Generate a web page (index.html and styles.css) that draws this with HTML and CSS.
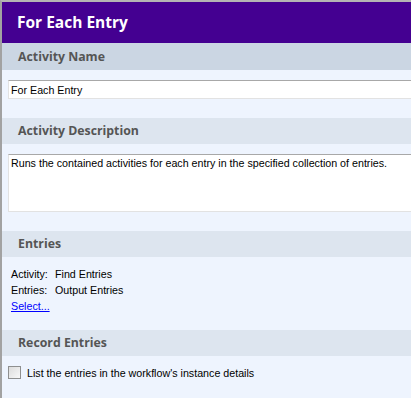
FILE: index.html
```html
<!DOCTYPE html>
<html>
<head>
    <title>For Each Entry</title>
    <link rel="stylesheet" href="styles.css">
</head>
<body>
    <div class="panel">
        <div class="title">For Each Entry</div>

        <div class="section-head active">Activity Name</div>
        <div class="section-body">
            <input type="text" class="field" value="For Each Entry">
        </div>

        <div class="section-head">Activity Description</div>
        <div class="section-body">
            <textarea class="field area">Runs the contained activities for each entry in the specified collection of entries.</textarea>
        </div>

        <div class="section-head">Entries</div>
        <div class="section-body entries">
            <span>Activity:</span><span>Find Entries</span>
            <span>Entries:</span><span>Output Entries</span>
            <a href="#" class="select-link">Select...</a>
        </div>

        <div class="section-head">Record Entries</div>
        <div class="section-body">
            <label class="check">
                <input type="checkbox">
                List the entries in the workflow's instance details
            </label>
        </div>
    </div>
</body>
</html>
```

FILE: styles.css
```css
/* Panneau de propriétés */
body {
    margin: 0;
    padding: 0;
    overflow: hidden;
    background-color: #eef4fe;
    font-family: 'Liberation Sans', Arial, sans-serif;
    font-size: 10.7px;
    color: #000;
}
.panel {
    height: 398px;
    border-top: 2px solid #b4b4b4;
    border-left: 2px solid #a2a2a2;
    background-color: #eef4fe;
    box-sizing: border-box;
}
.title {
    height: 41px;
    background-color: #440091;
    color: #fff;
    font-family: 'Open Sans', sans-serif;
    font-weight: bold;
    font-size: 15.5px;
    line-height: 41px;
    padding-left: 15px;
}
.section-head {
    height: 26px;
    line-height: 26px;
    background-color: #dde5ef;
    color: #555;
    font-family: 'Open Sans', sans-serif;
    font-weight: bold;
    font-size: 12.3px;
    padding-left: 16px;
}
.section-head.active {
    background-color: #cbd6e3;
    height: 27px;
    line-height: 27px;
}
.section-body {
    padding: 10px 0 19px 6px;
}
.field {
    display: block;
    width: 100%;
    height: 19px;
    box-sizing: border-box;
    margin: 0;
    padding: 1px 2px;
    border: 1px solid #e2e2e2;
    border-top-color: #a8a8a8;
    border-right: 0;
    background-color: #fff;
    font-family: 'Liberation Sans', Arial, sans-serif;
    font-size: 10.7px;
    color: #000;
    outline: none;
}
.area {
    height: 58px;
    resize: none;
    padding: 2px 2px;
    overflow: hidden;
}
.entries {
    display: grid;
    grid-template-columns: 44px auto;
    line-height: 16px;
    padding: 9px 0 16px 9px;
}
.select-link {
    grid-column: 1 / 3;
    color: #0000ff;
}
.check {
    display: flex;
    align-items: center;
    gap: 6px;
}
.check input {
    appearance: none;
    width: 13px;
    height: 13px;
    margin: 0;
    border: 1px solid #8e8f8f;
    background: linear-gradient(135deg, #dcdcdc, #f8f8f8);
    box-sizing: border-box;
}
```
